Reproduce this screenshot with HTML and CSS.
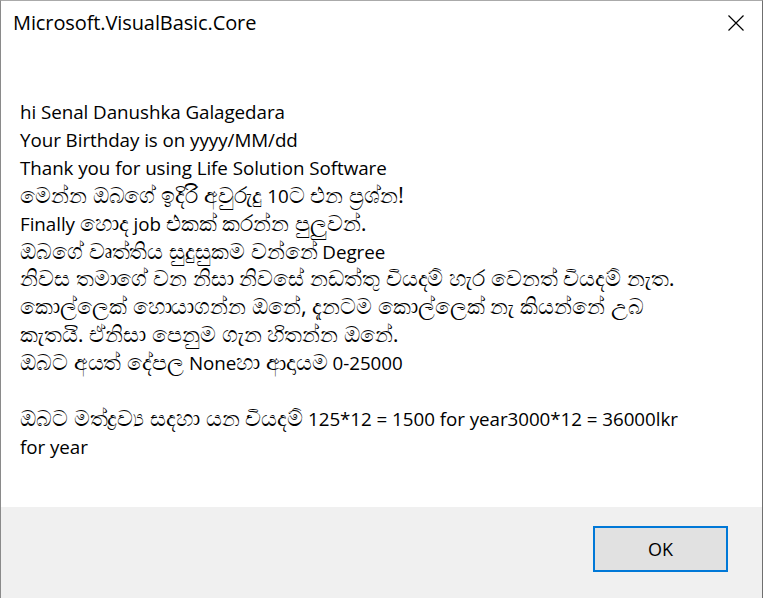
FILE: index.html
```html
<!DOCTYPE html>
<html>
<head>
<meta charset="utf-8">
<link rel="stylesheet" href="styles.css">
</head>
<body>
<div class="window">
  <div class="titlebar">
    <span class="title">Microsoft.VisualBasic.Core</span>
    <span class="close">
      <svg width="16" height="16" viewBox="0 0 16 16"><path d="M0.5 0.5 L15.5 15.5 M15.5 0.5 L0.5 15.5" stroke="#000" stroke-width="1.2" fill="none"/></svg>
    </span>
  </div>
  <div class="content">
    <p class="message">hi Senal Danushka Galagedara<br>Your Birthday is on yyyy/MM/dd<br>Thank you for using Life Solution Software<br><span class="si">මෙන්න ඔබගේ ඉදිරි අවුරුදු </span>10<span class="si">ට එන ප්‍රශ්න!</span><br>Finally <span class="si">හොද</span> job <span class="si">එකක් කරන්න පුලුවන්.</span><br><span class="si">ඔබගේ වෘත්තිය සුදුසුකම වන්නේ</span> Degree<br><span class="si">නිවස තමාගේ වන නිසා නිවසේ නඩත්තු වියදම් හැර වෙනත් වියදම් නැත.</span><br><span class="si">කොල්ලෙක් හොයාගන්න ඔනේ, දැනටම කොල්ලෙක් නැ කියන්නේ උබ</span><br><span class="si">කැතයි. ඒනිසා පෙනුම ගැන හිතන්න ඔනේ.</span><br><span class="si">ඔබට අයත් දේපල</span> None<span class="si">හා ආදායම</span> 0-25000<br><br><span class="si">ඔබට මත්ද්‍රව්‍ය සදහා යන වියදම්</span> 125*12 = 1500 for year3000*12 = 36000lkr<br>for year</p>
  </div>
  <div class="footer">
    <button class="ok">OK</button>
  </div>
</div>
</body>
</html>
```
FILE: styles.css
```css
html, body {
  margin: 0;
  padding: 0;
  height: 100%;
}
body {
  background: #ffffff;
  font-family: "Open Sans", "Noto Sans", "DejaVu Sans", sans-serif;
  color: #000;
}
.window {
  box-sizing: border-box;
  width: 763px;
  height: 598px;
  border-left: 1px solid #8a8a8a;
  border-right: 1px solid #6f6f6f;
  border-top: 1px solid #aaaaaa;
  display: flex;
  flex-direction: column;
  background: #fff;
}
.titlebar {
  height: 44px;
  display: flex;
  align-items: center;
  justify-content: space-between;
  padding: 0 18px 0 12px;
  flex: none;
}
.title {
  font-size: 20px;
  letter-spacing: -0.1px;
  padding-bottom: 1px;
}
.close {
  display: flex;
  width: 16px;
  height: 16px;
}
.content {
  flex: 1;
  padding: 54px 20px 0 19px;
}
.message {
  margin: 0;
  font-size: 18.8px;
  line-height: 27.9px;
  letter-spacing: -0.05px;
  white-space: nowrap;
}
.si {
  font-size: 22.3px;
  line-height: 1;
}
.footer {
  flex: none;
  height: 91px;
  background: #f0f0f0;
  display: flex;
  justify-content: flex-end;
  align-items: flex-start;
  padding: 19px 34px 0 0;
  box-sizing: border-box;
}
.ok {
  width: 135px;
  height: 46px;
  border: 2px solid #0078d7;
  background: #e1e1e1;
  font-family: "Open Sans", "Noto Sans", sans-serif;
  font-size: 18px;
  color: #000;
  padding: 0 0 1px 0;
}
```
